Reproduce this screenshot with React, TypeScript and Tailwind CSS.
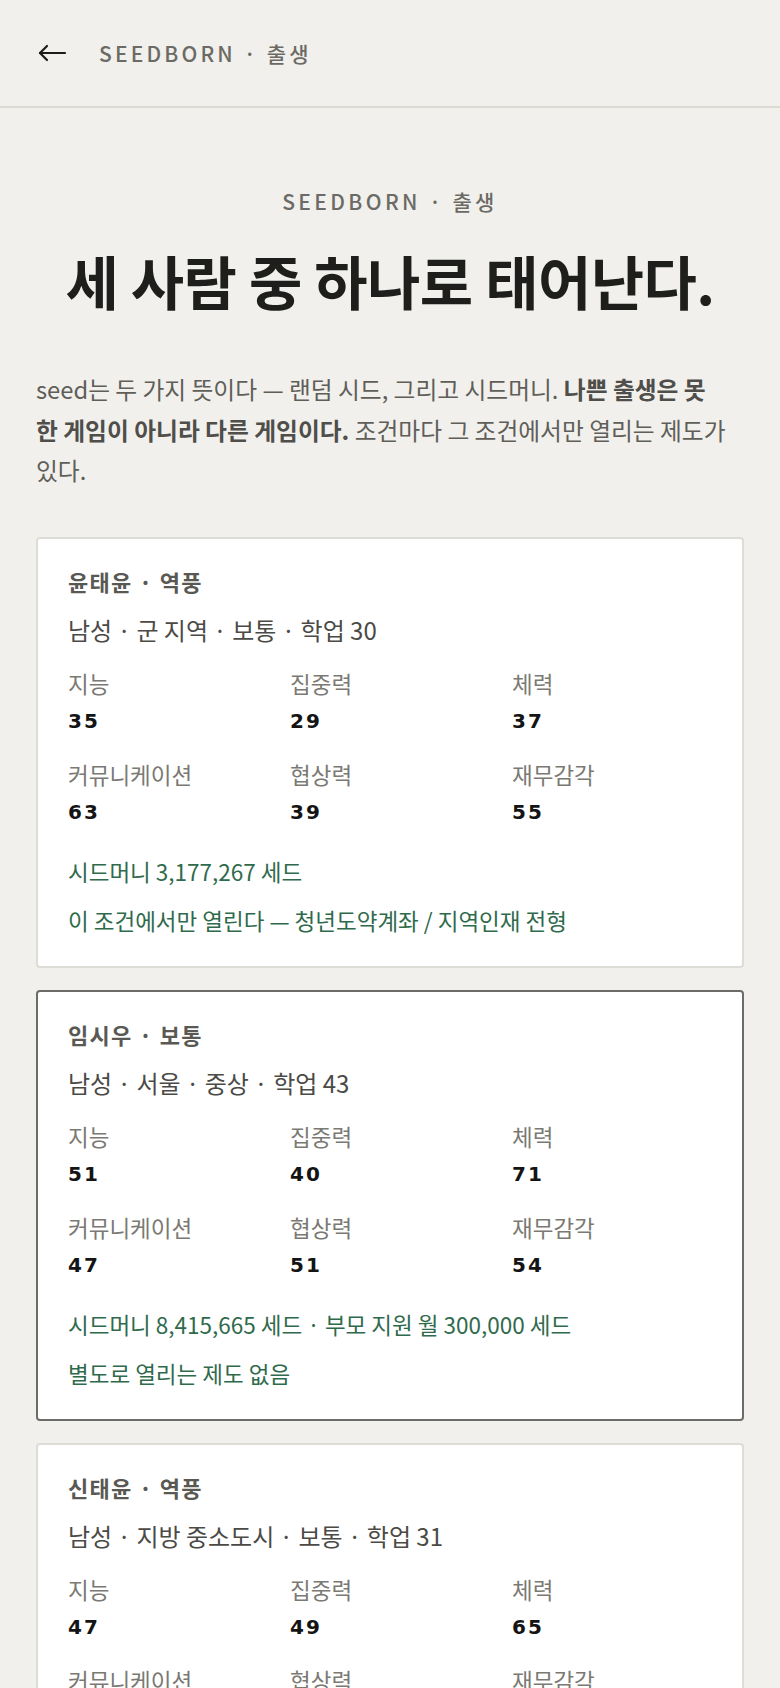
import React from "react";

type Stat = { label: string; value: number };

interface Person {
  name: string;
  tag: string;
  profile: string;
  stats: Stat[];
  seed: string;
  note: string;
  selected?: boolean;
}

const PEOPLE: Person[] = [
  {
    name: "윤태윤",
    tag: "역풍",
    profile: "남성 · 군 지역 · 보통 · 학업 30",
    stats: [
      { label: "지능", value: 35 },
      { label: "집중력", value: 29 },
      { label: "체력", value: 37 },
      { label: "커뮤니케이션", value: 63 },
      { label: "협상력", value: 39 },
      { label: "재무감각", value: 55 },
    ],
    seed: "시드머니 3,177,267 세드",
    note: "이 조건에서만 열린다 — 청년도약계좌 / 지역인재 전형",
  },
  {
    name: "임시우",
    tag: "보통",
    profile: "남성 · 서울 · 중상 · 학업 43",
    stats: [
      { label: "지능", value: 51 },
      { label: "집중력", value: 40 },
      { label: "체력", value: 71 },
      { label: "커뮤니케이션", value: 47 },
      { label: "협상력", value: 51 },
      { label: "재무감각", value: 54 },
    ],
    seed: "시드머니 8,415,665 세드 · 부모 지원 월 300,000 세드",
    note: "별도로 열리는 제도 없음",
    selected: true,
  },
  {
    name: "신태윤",
    tag: "역풍",
    profile: "남성 · 지방 중소도시 · 보통 · 학업 31",
    stats: [
      { label: "지능", value: 47 },
      { label: "집중력", value: 49 },
      { label: "체력", value: 65 },
      { label: "커뮤니케이션", value: 52 },
      { label: "협상력", value: 44 },
      { label: "재무감각", value: 41 },
    ],
    seed: "시드머니 2,904,118 세드",
    note: "이 조건에서만 열린다 — 청년도약계좌 / 지역인재 전형",
  },
];

function BackArrow() {
  return (
    <svg width="30" height="18" viewBox="0 0 30 18" fill="none" className="shrink-0">
      <path d="M28 9H3" stroke="#1c1c1a" strokeWidth="2.2" strokeLinecap="round" />
      <path d="M10 2L3 9l7 7" stroke="#1c1c1a" strokeWidth="2.2" strokeLinecap="round" strokeLinejoin="round" />
    </svg>
  );
}

function PersonCard({ person }: { person: Person }) {
  return (
    <div
      className={`rounded-[4px] border-2 bg-white px-[30px] pt-[27px] pb-[31px] ${
        person.selected ? "border-[#6b6b67]" : "border-[#dedcd6]"
      }`}
    >
      <p className="text-[22px] leading-[30px] font-bold tracking-[0.06em] text-[#595853]">
        {person.name} · {person.tag}
      </p>
      <p className="mt-[18px] text-[24px] leading-[32px] text-[#4b4a46]">{person.profile}</p>
      <div className="mt-[23px] grid grid-cols-3 gap-x-[22px] gap-y-[25px]">
        {person.stats.map((s) => (
          <div key={s.label} className="flex flex-col gap-[10px]">
            <span className="text-[22.5px] leading-[28px] text-[#7a7973]">{s.label}</span>
            <span className="font-['DejaVu_Sans',sans-serif] text-[20px] leading-[28px] font-bold tracking-[0.1em] text-[#141414]">
              {s.value}
            </span>
          </div>
        ))}
      </div>
      <p className="mt-[30px] text-[22.5px] leading-[30px] text-[#2f6a4c]">{person.seed}</p>
      <p className="mt-[19px] text-[22.5px] leading-[30px] text-[#2f6a4c]">{person.note}</p>
    </div>
  );
}

export default function App() {
  return (
    <div className="min-h-screen bg-[#f1f0ec] font-['Noto_Sans_CJK_KR',sans-serif]">
      <header className="flex h-[108px] items-center gap-[32px] border-b-2 border-[#dcdad3] px-[37px]">
        <BackArrow />
        <span className="text-[21px] leading-[30px] font-medium tracking-[0.15em] text-[#6b6a64]">
          SEEDBORN · 출생
        </span>
      </header>

      <main className="px-9 pt-[78px] pb-10">
        <p className="text-center text-[21px] leading-[30px] font-medium tracking-[0.16em] text-[#6b6a64]">
          SEEDBORN · 출생
        </p>
        <h1 className="mt-[28px] text-center text-[58px] leading-[72px] font-bold tracking-[-0.01em] text-[#1e1e1c]">
          세 사람 중 하나로 태어난다.
        </h1>
        <p className="mt-[53px] text-[23.75px] leading-[40.5px] text-[#5f5e59]">
          seed는 두 가지 뜻이다 — 랜덤 시드, 그리고 시드머니.{" "}
          <strong className="font-bold text-[#4f4e4a]">
            나쁜 출생은 못<br />한 게임이 아니라 다른 게임이다.
          </strong>{" "}
          조건마다 그 조건에서만 열리는 제도가
          <br />
          있다.
        </p>

        <div className="mt-[46px] flex flex-col gap-[22px]">
          {PEOPLE.map((p) => (
            <PersonCard key={p.name} person={p} />
          ))}
        </div>
      </main>
    </div>
  );
}
